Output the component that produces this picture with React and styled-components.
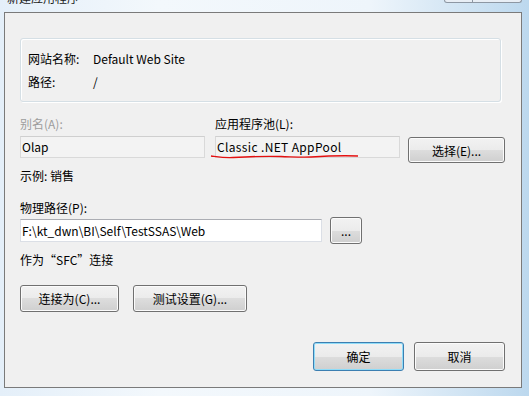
import React from 'react'
import styled, { createGlobalStyle } from 'styled-components'

const GlobalStyle = createGlobalStyle`
html, body {
  margin:0;
  padding:0;
}
body {
  font-family:"Noto Sans CJK SC", "Noto Sans", sans-serif;
  font-size:12px;
  color:#000;
}
`

const Window = styled.div`
width:529px;
height:396px;
overflow:hidden;
display:flex;
flex-direction:column;
background:linear-gradient(90deg, #e4eff9 0%, #f3f8fc 30%, #eef5fb 70%, #bcd8ee 100%);
`

const TitleBar = styled.div`
height:12px;
display:flex;
justify-content:space-between;
padding:0 7px 0 7px;
overflow:hidden;
`

const Title = styled.span`
line-height:16px;
margin-top:-10px;
color:#1a1a1a;
`

const CaptionButtons = styled.div`
display:flex;
height:2px;
align-self:flex-start;
border:1px solid #8d97a3;
border-top:none;
border-radius:0 0 5px 5px;
background:#e8eef5;
`

const CaptionButton = styled.div`
width:${p => p.w}px;
& + & {
  border-left:1px solid #8d97a3;
}
`

const Client = styled.div`
flex:1;
margin:0 7px 8px 4px;
border:1px solid #7a7a7a;
background:#f0f0f0;
padding:25px 16px 16px 15px;
display:flex;
flex-direction:column;
`

const GroupBox = styled.div`
width:481px;
height:64px;
box-sizing:border-box;
border:1px solid #d5dfe5;
border-radius:3px;
box-shadow:inset 1px 1px 0 #fff, 1px 1px 0 #fff;
padding:8px 7px 0 7px;
`

const InfoRow = styled.div`
display:grid;
grid-template-columns:65px 1fr;
line-height:23px;
`

const PoolGrid = styled.div`
margin-top:14px;
display:grid;
grid-template-columns:195px 193px 96px;
align-items:start;
`

const FieldLabel = styled.div`
line-height:16px;
margin-bottom:${p => p.gap ?? 4}px;
color:${p => (p.disabled ? '#9d9d9d' : '#000')};
`

const TextBox = styled.div`
position:relative;
width:${p => p.w}px;
height:${p => p.h ?? 22}px;
box-sizing:border-box;
padding:0 1px;
line-height:${p => (p.h ?? 22) - 2}px;
white-space:nowrap;
letter-spacing:${p => p.spread ?? 0}px;
border:1px solid ${p => (p.readOnly ? '#d9d9d9' : '#dbdfe6')};
border-top-color:${p => (p.readOnly ? '#cfcfcf' : '#abadb3')};
background:${p => (p.readOnly ? '#f3f3f3' : '#fff')};
`

const Button = styled.button`
width:${p => p.w}px;
height:${p => p.h ?? 27}px;
margin-top:${p => p.top ?? 0}px;
box-sizing:border-box;
padding:0;
font:inherit;
color:#000;
border:1px solid ${p => (p.primary ? '#3c7fb1' : '#707070')};
border-radius:3px;
background:linear-gradient(#f2f2f2 0%, #ebebeb 50%, #dddddd 50%, #cfcfcf 100%);
box-shadow:inset 0 0 0 1px ${p => (p.primary ? '#8fdcf8' : '#fbfbfb')};
`

const Underline = styled.svg`
position:absolute;
left:-5px;
top:17px;
overflow:visible;
`

const Example = styled.div`
margin-top:5px;
line-height:16px;
`

const PathLabel = styled(FieldLabel)`
margin-top:16px;
`

const PathRow = styled.div`
display:flex;
align-items:center;
gap:8px;
`

const Note = styled.div`
margin-top:8px;
line-height:16px;
`

const ButtonRow = styled.div`
display:flex;
gap:${p => p.gap}px;
margin-top:${p => p.top ?? 0}px;
justify-content:${p => (p.end ? 'flex-end' : 'flex-start')};
`

const Footer = styled(ButtonRow)`
margin-top:auto;
`

export default function App() {
  return (
    <Window>
      <GlobalStyle />
      <TitleBar>
        <Title>新建应用程序</Title>
        <CaptionButtons>
          <CaptionButton w={27} />
          <CaptionButton w={48} />
        </CaptionButtons>
      </TitleBar>
      <Client>
        <GroupBox>
          <InfoRow>
            <span>网站名称:</span>
            <span>Default Web Site</span>
          </InfoRow>
          <InfoRow>
            <span>路径:</span>
            <span>/</span>
          </InfoRow>
        </GroupBox>

        <PoolGrid>
          <FieldLabel disabled>别名(A):</FieldLabel>
          <FieldLabel>应用程序池(L):</FieldLabel>
          <span />
          <TextBox readOnly w={185}>Olap</TextBox>
          <TextBox readOnly w={185} spread={0.35}>
            Classic .NET AppPool
            <Underline width="150" height="6">
              <path
                d="M0 2 C8 3 14 4 22 3.5 C40 2.5 55 2 70 2.5 C85 3 92 3.5 100 3 C115 2 135 1.5 147 2"
                fill="none"
                stroke="#e41010"
                strokeWidth="1.3"
              />
            </Underline>
          </TextBox>
          <Button w={97} h={26} top={1}>选择(E)...</Button>
        </PoolGrid>

        <Example>示例: 销售</Example>

        <PathLabel gap={1}>物理路径(P):</PathLabel>
        <PathRow>
          <TextBox w={302} h={23}>F:\kt_dwn\BI\Self\TestSSAS\Web</TextBox>
          <Button w={32} h={27}>...</Button>
        </PathRow>

        <Note>作为“SFC”连接</Note>

        <ButtonRow gap={14} top={17}>
          <Button w={99}>连接为(C)...</Button>
          <Button w={114}>测试设置(G)...</Button>
        </ButtonRow>

        <Footer gap={10} end>
          <Button primary w={91} h={29}>确定</Button>
          <Button w={91} h={29}>取消</Button>
        </Footer>
      </Client>
    </Window>
  )
}
